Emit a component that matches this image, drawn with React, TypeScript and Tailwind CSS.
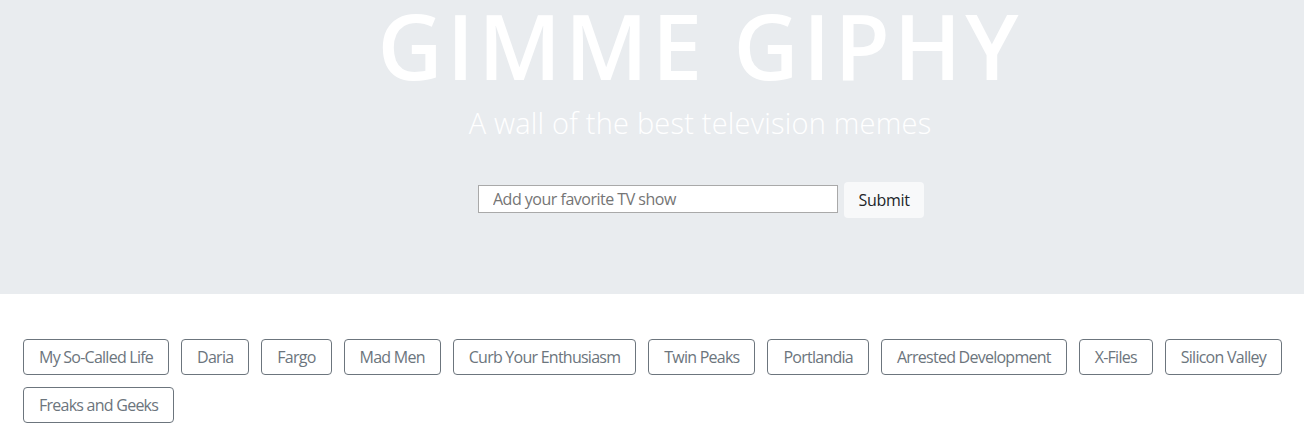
import React from "react";

const shows = [
  "My So-Called Life",
  "Daria",
  "Fargo",
  "Mad Men",
  "Curb Your Enthusiasm",
  "Twin Peaks",
  "Portlandia",
  "Arrested Development",
  "X-Files",
  "Silicon Valley",
  "Freaks and Geeks",
];

export default function App() {
  return (
    <div className="w-[1304px] h-[429px] bg-white overflow-hidden" style={{ fontFamily: '"Open Sans", "Noto Sans", sans-serif' }}>
      <div className="h-[294px] bg-[#e9ecef] flex flex-col items-center pl-[96px]">
        <h1 className="text-[90px] leading-[90px] font-semibold tracking-[4px] text-white">GIMME GIPHY</h1>
        <p className="mt-[13px] text-[29px] leading-[40px] font-light text-white tracking-[0.2px]">A wall of the best television memes</p>
        <div className="mt-[39px] flex items-start gap-[6px] ml-[2px]">
          <input
            className="mt-[3px] w-[360px] h-[28px] border border-[#a9a9a9] bg-white px-[14px] text-[16px] tracking-[-0.5px] text-[#495057] placeholder:text-[#757575] outline-none"
            placeholder="Add your favorite TV show"
          />
          <button className="h-[36px] w-[80px] rounded-[4px] bg-[#f8f9fa] text-[16px] tracking-[-0.3px] text-[#212529]">Submit</button>
        </div>
      </div>
      <div className="flex flex-wrap gap-[12px] pl-[23px] pr-[14px] pt-[45px]">
        {shows.map((s) => (
          <button
            key={s}
            className="h-[36px] px-[15px] rounded-[4px] border border-[#6c757d] text-[#6c757d] text-[16px] tracking-[-0.75px] bg-white"
          >
            {s}
          </button>
        ))}
      </div>
    </div>
  );
}
